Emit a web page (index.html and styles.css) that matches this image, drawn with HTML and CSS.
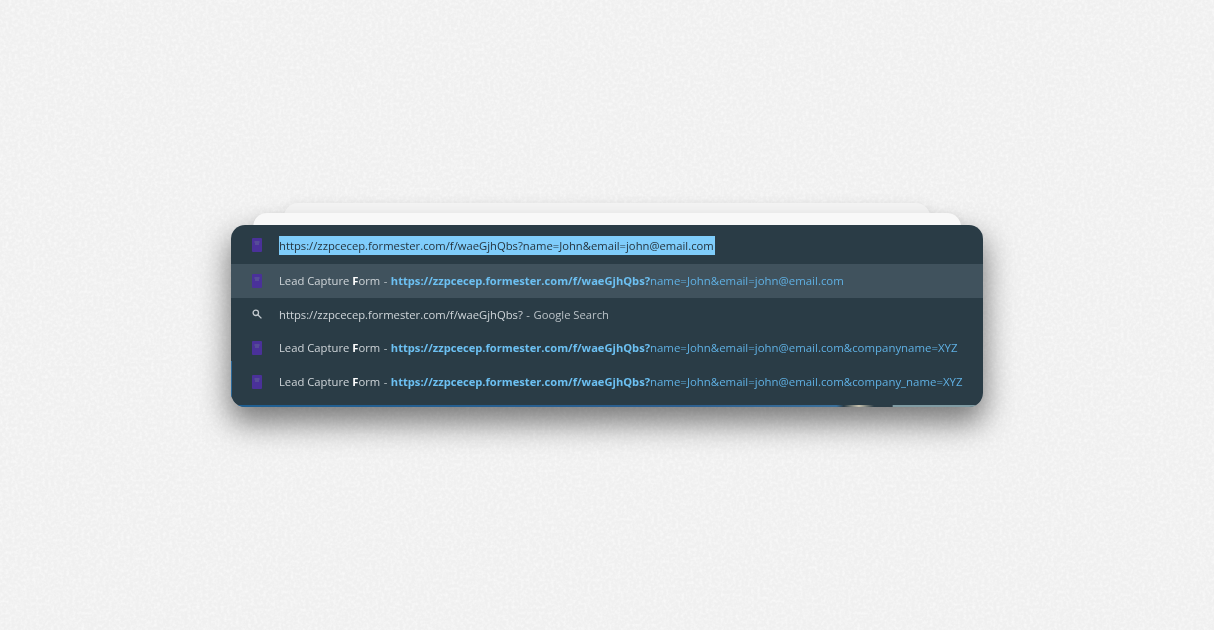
FILE: index.html
```html
<!DOCTYPE html>
<html lang="en">
<head>
<meta charset="utf-8">
<title>Omnibox prefill suggestions</title>
<link rel="stylesheet" href="styles.css">
</head>
<body>
<svg class="grain" width="1214" height="630" aria-hidden="true">
  <filter id="noise" x="0" y="0" width="100%" height="100%">
    <feTurbulence type="fractalNoise" baseFrequency="0.33" numOctaves="2" seed="4"/>
    <feColorMatrix type="matrix" values="0 0 0 0 1  0 0 0 0 1  0 0 0 0 1  2.2 0 0 0 -0.85"/>
  </filter>
  <rect width="1214" height="630" filter="url(#noise)"/>
</svg>
<main class="stage">
  <div class="sheet sheet-far"></div>
  <div class="sheet sheet-near"></div>
  <section class="omnibox">
    <div class="row row-input">
      <svg class="icon" viewBox="0 0 10 14"><use href="#form"/></svg>
      <span class="selected">https://zzpcecep.formester.com/f/waeGjhQbs?name=John&amp;email=john@email.com</span>
    </div>
    <div class="row row-active">
      <svg class="icon" viewBox="0 0 10 14"><use href="#form"/></svg>
      <span class="title">Lead Capture <b class="match">F</b>orm</span><span class="dash">-</span><span class="url"><b>https://zzpcecep.formester.com/f/waeGjhQbs?</b>name=John&amp;email=john@email.com</span>
    </div>
    <div class="row">
      <svg class="icon-search" viewBox="0 0 10 10"><circle cx="3.8" cy="3.8" r="2.7"/><path d="M5.8 5.8 9.4 9.4"/></svg>
      <span class="title">https://zzpcecep.formester.com/f/waeGjhQbs?</span><span class="dash">-</span><span class="hint">Google Search</span>
    </div>
    <div class="row">
      <svg class="icon" viewBox="0 0 10 14"><use href="#form"/></svg>
      <span class="title">Lead Capture <b class="match">F</b>orm</span><span class="dash">-</span><span class="url"><b>https://zzpcecep.formester.com/f/waeGjhQbs?</b>name=John&amp;email=john@email.com&amp;companyname=XYZ</span>
    </div>
    <div class="row">
      <svg class="icon" viewBox="0 0 10 14"><use href="#form"/></svg>
      <span class="title">Lead Capture <b class="match">F</b>orm</span><span class="dash">-</span><span class="url"><b>https://zzpcecep.formester.com/f/waeGjhQbs?</b>name=John&amp;email=john@email.com&amp;company_name=XYZ</span>
    </div>
    <div class="peek"></div>
  </section>
</main>
<svg width="0" height="0" class="defs" aria-hidden="true">
  <symbol id="form" viewBox="0 0 10 14">
    <path d="M1 0h8a1 1 0 0 1 1 1v12a1 1 0 0 1-1 1H1a1 1 0 0 1-1-1V1a1 1 0 0 1 1-1z" fill="#4a3199"/>
    <path d="M2.5 4h5M3 6h4" stroke="#6f7f95" stroke-width="1" opacity=".7"/>
  </symbol>
</svg>
</body>
</html>
```
FILE: styles.css
```css
* { box-sizing: border-box; }
html, body { margin: 0; height: 100%; }
html { background: #f0f0f0; }
body {
  width: 1214px;
  height: 630px;
  overflow: hidden;
  font-family: "Open Sans", "Liberation Sans", sans-serif;
  position: relative;
}
.grain { position: absolute; left: 0; top: 0; opacity: .5; z-index: -2; }
.defs { position: absolute; }
.stage {
  position: relative;
  display: flex;
  flex-direction: column;
  align-items: center;
  width: 752px;
  margin-left: 231px;
  padding-top: 203px;
}
.sheet { border-radius: 14px 14px 0 0; }
.sheet-far {
  width: 646px;
  height: 30px;
  margin-bottom: -20px;
  background: #f3f3f3;
  box-shadow: 0 0 12px rgba(0,0,0,.07);
}
.sheet-near {
  width: 708px;
  height: 30px;
  margin-bottom: -18px;
  background: #f8f8f8;
  box-shadow: 0 0 12px rgba(0,0,0,.07);
  position: relative;
}
.omnibox {
  position: relative;
  width: 752px;
  height: 182px;
  background: #2a3c46;
  border-radius: 14px;
  overflow: hidden;
  font-size: 11.26px;
  color: #d5dadd;
}
.omnibox::before {
  content: "";
  position: absolute;
  left: 0;
  top: 136px;
  width: 1px;
  height: 36px;
  background: #2a6a9c;
}
.stage::after {
  content: "";
  position: absolute;
  left: 0;
  right: 0;
  top: 225px;
  height: 182px;
  border-radius: 14px;
  box-shadow: 0 14px 30px 2px rgba(0,0,0,.5);
  z-index: -1;
}
.row {
  display: flex;
  align-items: center;
  height: 33.6px;
  padding-left: 21px;
  white-space: nowrap;
  filter: blur(.3px);
}
.row-input { height: 39px; padding-top: 1px; }
.row-active { background: #40525d; }
.icon { width: 10px; height: 14px; margin-right: 17px; flex: none; }
.icon-search {
  width: 10px; height: 10px; margin-right: 17px; flex: none;
  fill: none; stroke: #c4cbd0; stroke-width: 1.3;
}
.selected {
  background: #7fcdfb;
  color: #25343e;
  height: 19px;
  line-height: 19px;
  padding-right: 1px;
}
.title { color: #cfd5d9; }
.match { color: #fff; font-weight: 700; }
.dash { margin: 0 3.5px; color: #b9c1c6; }
.hint { color: #b9c1c6; }
.url { color: #5fb0e3; font-size: 11.43px; }
.url b { color: #6cc0f2; font-weight: 700; font-size: 11.15px; }
.peek {
  position: absolute;
  left: 0;
  right: 0;
  bottom: 0;
  height: 2px;
  background: linear-gradient(90deg, #1f5f92 0, #2d5f8f 60%, #3a6f9a 80.5%, #2a3c46 81.5%, #c9c4b0 83.5%, #2a3c46 85.5%, #2a3c46 87.9%, #7f9ba3 88.1%, #7f9ba3 100%);
}
```
